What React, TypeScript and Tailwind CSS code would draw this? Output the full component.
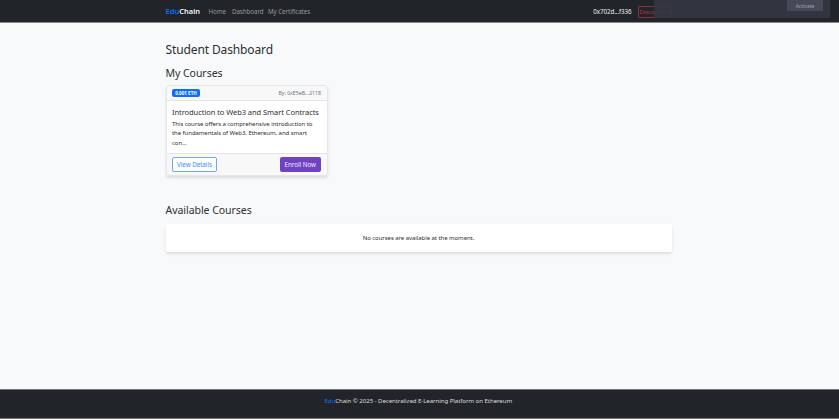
export default function App() {
  return (
    <div className="relative flex h-[419px] w-full flex-col overflow-hidden bg-[#f8f9fa] font-['Noto_Sans','Open_Sans',sans-serif] text-[#2c3034]">
      <header className="h-[23px] shrink-0 border-b border-[#85888a] bg-[#212529]">
        <nav className="ml-[165.5px] flex h-6 w-[506px] items-center whitespace-nowrap text-[6.2px] tracking-[-0.06px] text-[#96989b]">
          <a className="w-[43px] text-[7.5px] font-semibold tracking-normal text-[#f4f4f4]"><span className="text-[#0d6efd]">Edu</span>Chain</a>
          <a className="w-[23.5px]">Home</a>
          <a className="w-[36px]">Dashboard</a>
          <a>My Certificates</a>
          <span className="ml-auto mr-[6px] text-[#eee]">0x702d...f336</span>
          <button className="flex h-3 w-[34px] items-center justify-center rounded-[1px] border border-[#8b2f3b] text-[6px] text-[#b83242]">Disconnect</button>
        </nav>
      </header>
      <div className="absolute left-[654px] top-0 h-[18px] w-[176px] bg-[#343743]/90">
        <button className="ml-[133px] flex h-[11px] w-9 items-center justify-center bg-[#454958] pt-[2px] text-[5px] text-[#a3a5ad]">Activate</button>
      </div>
      <main className="ml-[165.5px] w-[506px] flex-1">
        <h1 className="mt-[17px] h-[18px] text-[12px] leading-[19px] tracking-[-0.12px]">Student Dashboard</h1>
        <h2 className="mt-[6px] h-[16px] text-[10.5px] leading-[18px] tracking-[-0.04px]">My Courses</h2>
        <article className="mt-[5px] flex h-[91px] w-[162px] flex-col overflow-hidden rounded-[3px] border border-[#e6e7e8] bg-white shadow-[0_2px_3px_rgba(0,0,0,0.11)]">
          <div className="flex h-[15px] items-center justify-between border-b border-[#e3e4e5] bg-[#f8f8f8] px-[5.5px] text-[5.2px]">
            <span className="flex h-2 w-7 items-center justify-center whitespace-nowrap rounded-[2px] bg-[#0d6efd] text-[4.6px] font-bold text-white">0.001 ETH</span>
            <span className="pt-px text-[#6c757d]">By: 0xE5eB...2118</span>
          </div>
          <div className="flex-1 whitespace-nowrap px-[5.5px] pt-[6px]">
            <h3 className="text-[7.5px] leading-[11px] tracking-[-0.06px]">Introduction to Web3 and Smart Contracts</h3>
            <p className="mt-[2px] text-[6px] leading-[9.3px] tracking-[-0.06px]">This course offers a comprehensive introduction to<br />the fundamentals of Web3, Ethereum, and smart<br />con...</p>
          </div>
          <div className="flex h-[22px] items-center justify-between border-t border-[#e3e4e5] bg-[#f8f8f8] px-[5.5px] text-[6.2px]">
            <button className="h-[15px] w-[45px] rounded-[2px] border border-[#6ea7fd] bg-white text-[#398afd]">View Details</button>
            <button className="h-[15px] w-[41.5px] rounded-[2px] bg-[#6f42c1] text-[#f2eefa]">Enroll Now</button>
          </div>
        </article>
        <h2 className="mt-[26px] h-[16px] text-[10.5px] leading-[17px] tracking-[-0.04px]">Available Courses</h2>
        <div className="mt-[6px] flex h-[28px] items-center justify-center rounded-[2px] bg-white text-[6px] tracking-[-0.06px] shadow-[0_2px_3px_rgba(0,0,0,0.11)]">No courses are available at the moment.</div>
      </main>
      <footer className="h-[30px] shrink-0 border-y border-[#77777a] bg-[#212529] pl-[324.5px] pt-[6px] text-[6.1px] leading-[10px] tracking-[-0.06px] text-[#ddd]"><span className="text-[#0d6efd]">Edu</span>Chain © 2025 - Decentralized E-Learning Platform on Ethereum</footer>
    </div>
  );
}
